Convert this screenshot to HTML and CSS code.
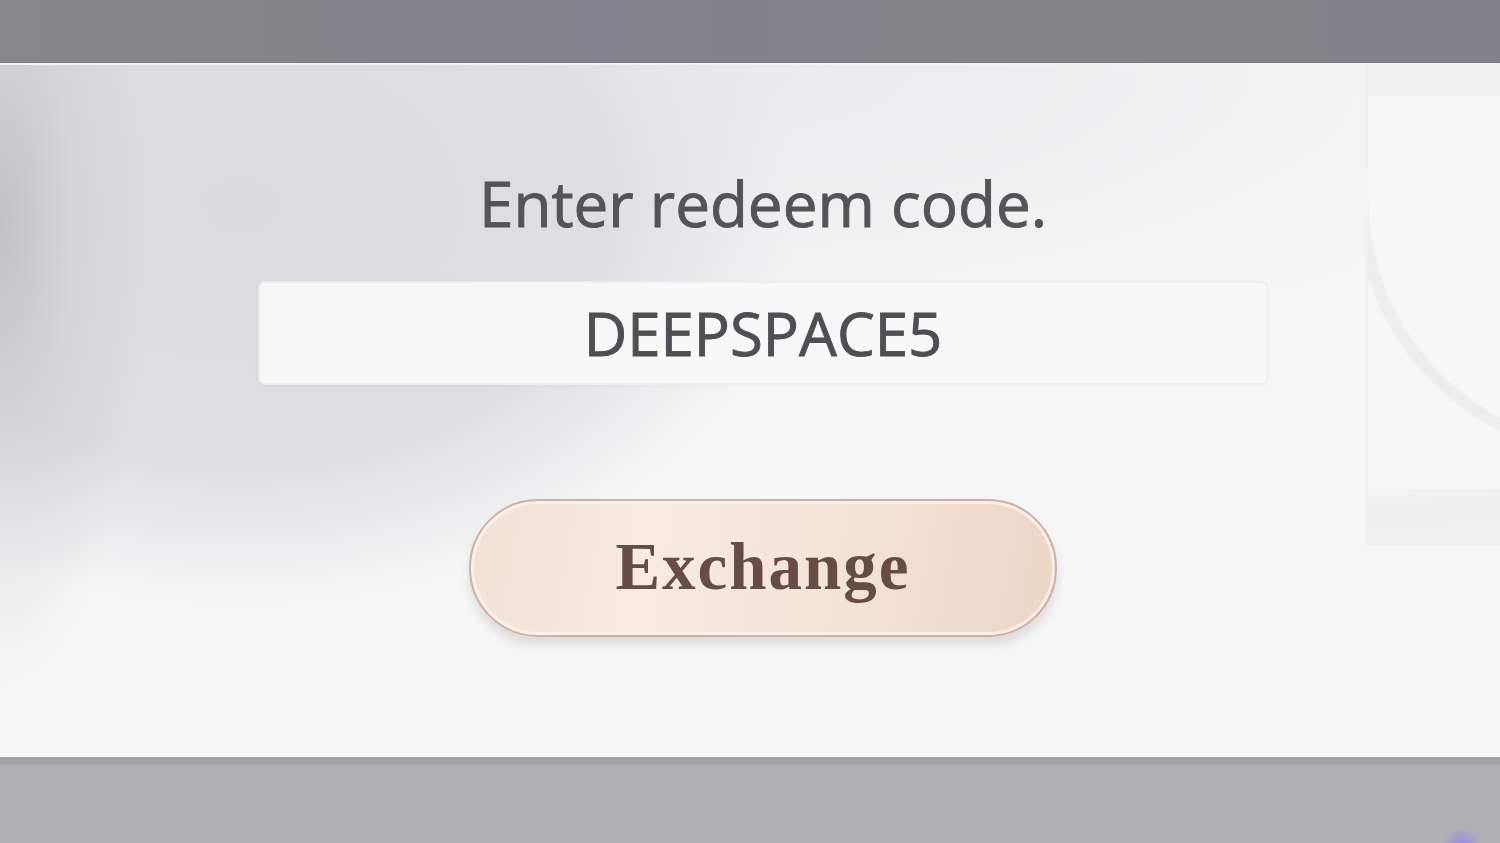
FILE: index.html
```html
<!DOCTYPE html>
<html lang="en">
<head>
<meta charset="UTF-8" />
<meta name="viewport" content="width=device-width, initial-scale=1" />
<title>Redeem Code</title>
<link rel="stylesheet" href="styles.css">
</head>
<body>

<div class="top-bar"></div>

<div class="panel">
  <div class="side-card"></div>
  <div class="side-strip"></div>

  <h2 class="title">Enter redeem code.</h2>

  <div class="code-box">
    <span class="code-text">DEEPSPACE5</span>
  </div>

  <button class="exchange-btn">Exchange</button>
</div>

<div class="bottom-bar">
  <div class="glow"></div>
</div>

</body>
</html>
```

FILE: styles.css
```css
body {
  margin: 0;
  height: 843px;
  overflow: hidden;
  font-family: "Open Sans", "Noto Sans", sans-serif;
  background: #aeadb2;
}
.top-bar {
  height: 62px;
  background: linear-gradient(90deg, #878689 0%, #83828e 40%, #858489 70%, #83828c 100%);
  border-bottom: 1px solid #7a797e;
}
.panel {
  position: relative;
  overflow: hidden;
  height: 694px;
  box-sizing: border-box;
  padding: 102px 0 0 26px;
  display: flex;
  flex-direction: column;
  align-items: center;
  border-top: 2px solid #f2f2f3;
  background:
    radial-gradient(ellipse 150px 460px at 0px 160px, rgba(190, 189, 194, 0.85) 0%, rgba(205, 204, 209, 0.5) 50%, rgba(220, 219, 224, 0) 100%),
    radial-gradient(ellipse 560px 400px at 240px 140px, #dcdbe0 0%, #dfdee3 65%, rgba(230, 229, 233, 0.6) 85%, rgba(246, 246, 246, 0) 100%),
    radial-gradient(ellipse 900px 300px at 700px 0px, #eaeaed 0%, rgba(246, 246, 246, 0) 100%),
    #f6f6f6;
}
.side-card {
  position: absolute;
  left: 1366px;
  top: 0;
  width: 140px;
  height: 480px;
  border-left: 2px solid #f0f0f1;
  background: linear-gradient(180deg, #f1f1f2 0px, #f1f1f2 30px, #f7f7f7 32px);
}
.side-card::after {
  content: "";
  position: absolute;
  left: 0;
  top: 135px;
  width: 140px;
  height: 300px;
  background: radial-gradient(circle at 246px 0px, rgba(238, 238, 239, 0) 244px, #ededee 247px, #eeeeef 256px, rgba(238, 238, 239, 0) 259px);
}
.side-strip {
  position: absolute;
  left: 1366px;
  top: 424px;
  width: 140px;
  height: 56px;
  border-left: 2px solid #f0f0f1;
  background: linear-gradient(175deg, #f4f4f4 0%, #efeff0 30%, #f1f1f1 100%);
}
.title {
  margin: 0;
  font-size: 62px;
  line-height: 72px;
  font-weight: 400;
  color: #545358;
  -webkit-text-stroke: 0.9px #545358;
}
.code-box {
  margin-top: 42px;
  width: 1010px;
  height: 104px;
  box-sizing: border-box;
  border-radius: 7px;
  border: 2px solid #eeeeef;
  background: #f8f8f8;
  box-shadow: 0 1px 4px rgba(0, 0, 0, 0.04);
  display: flex;
  align-items: center;
  justify-content: center;
}
.code-text {
  font-size: 60px;
  font-weight: 400;
  color: #4f4e53;
  -webkit-text-stroke: 0.9px #4f4e53;
}
.exchange-btn {
  margin-top: 114px;
  width: 588px;
  height: 138px;
  border-radius: 69px;
  border: 2px solid #cfb0a3;
  background: linear-gradient(100deg, #f1e1d5 0%, #f7ebe2 30%, #f3e3d7 65%, #ecd5c5 100%);
  box-shadow: inset 0 0 0 3px rgba(255, 246, 240, 0.75), 0 8px 10px rgba(80, 70, 70, 0.14);
  font-family: "Liberation Serif", "Times New Roman", serif;
  font-weight: 700;
  font-size: 67px;
  letter-spacing: 2px;
  color: #674c45;
  padding: 0 0 4px 0;
}
.bottom-bar {
  position: relative;
  height: 86px;
  border-top: 8px solid #a4a3a8;
  box-sizing: border-box;
  background: #b0afb4;
}
.glow {
  position: absolute;
  right: 18px;
  bottom: -24px;
  width: 40px;
  height: 40px;
  border-radius: 50%;
  background: radial-gradient(circle, rgba(150, 130, 240, 0.9) 0%, rgba(150, 130, 240, 0) 70%);
}
```
